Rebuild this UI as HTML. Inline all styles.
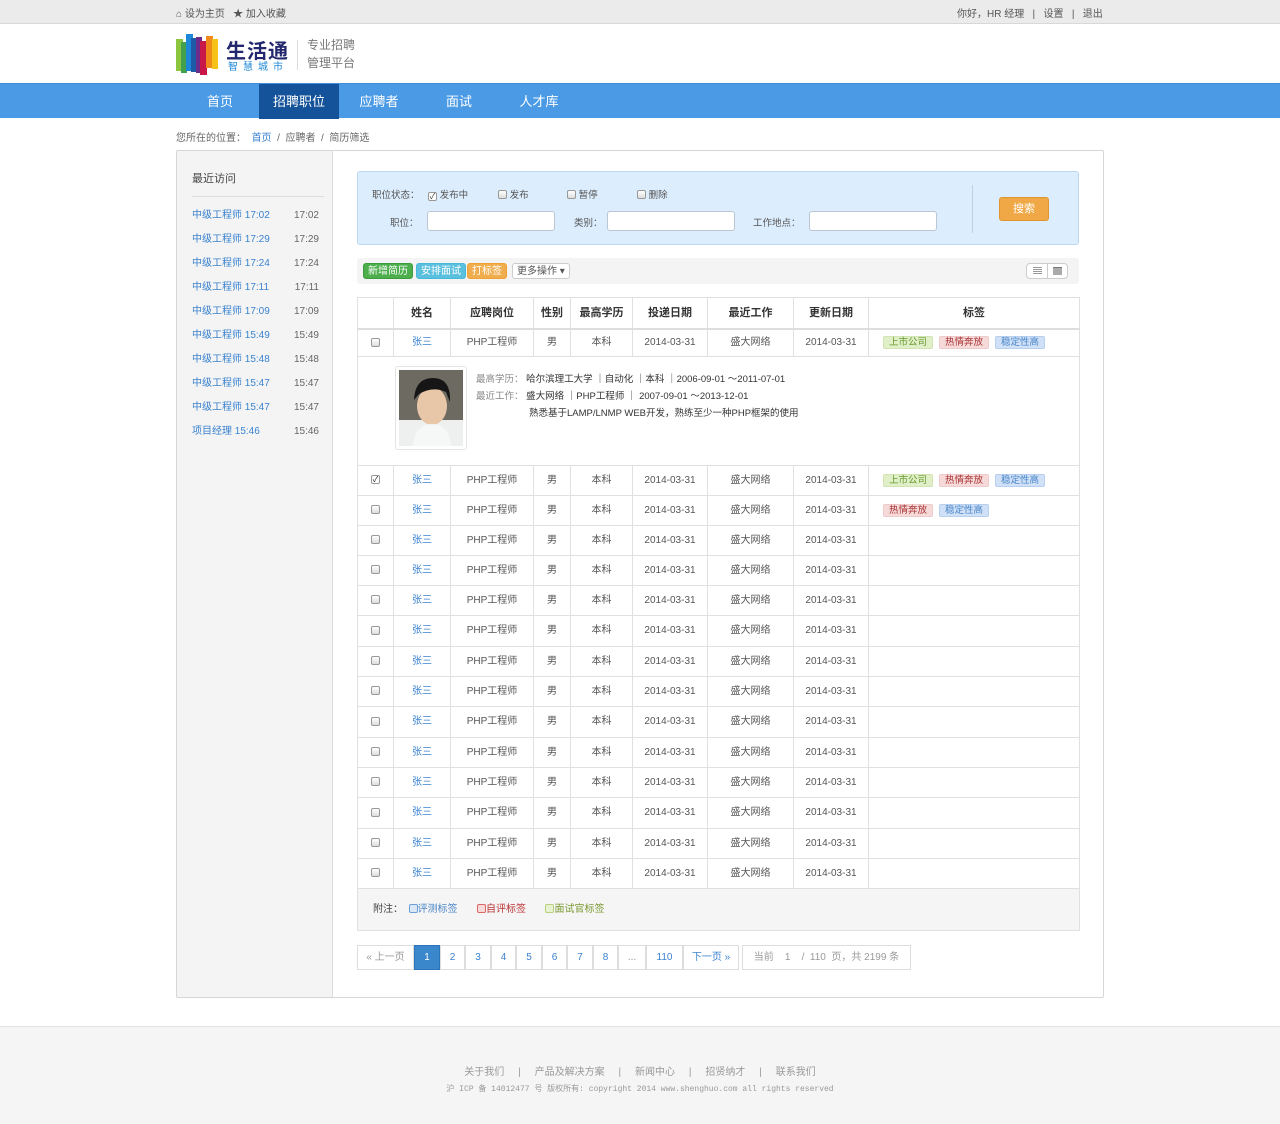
<!DOCTYPE html>
<html><head><meta charset="utf-8">
<style>
*{margin:0;padding:0;box-sizing:border-box}
body{width:1280px;height:1124px;position:relative;background:#fff;font-family:"Liberation Sans","Noto Sans CJK SC",sans-serif;font-size:10px;color:#555;overflow:hidden}
.a{position:absolute}
a{color:#3a82d0;text-decoration:none}
.topbar{left:0;top:0;width:1280px;height:24px;background:#ebebeb;border-bottom:1px solid #d8d8d8}
.nav{left:0;top:83px;width:1280px;height:35px;background:#4a9ae6;border-top:1px solid #3f8cd8}
.nav span{position:absolute;top:0;height:35px;line-height:35px;color:#fff;font-size:13px;text-align:center}
.box{left:176px;top:150px;width:928px;height:848px;border:1px solid #d6d6d6;border-radius:2px}
.side{left:177px;top:151px;width:156px;height:846px;background:#f4f4f4;border-right:1px solid #dcdcdc}
.sitem{position:absolute;left:15px;width:127px;font-size:10px;height:14px;line-height:14px}
.sitem b{font-weight:normal;position:absolute;right:0;top:0;color:#666}
.search{left:357px;top:171px;width:722px;height:74px;background:#dcedfd;border:1px solid #b9d9f4;border-radius:3px}
.cb{display:inline-block;width:9px;height:9px;border:1px solid #999;border-radius:2px;background:linear-gradient(#fff,#ddd);vertical-align:-1px}
.inp{position:absolute;height:20px;background:#fff;border:1px solid #bcc6d0;border-radius:3px;top:39px}
.tool{left:357px;top:258px;width:722px;height:26px;background:#f4f4f4;border-radius:3px}
.btn{position:absolute;top:5px;height:16px;line-height:15px;color:#fff;font-size:10px;padding:0 4px;border-radius:3px}
table{border-collapse:collapse;position:absolute;left:357px;table-layout:fixed;width:722px}
td,th{border:1px solid #e0e0e0;text-align:center;font-size:10px;color:#555;font-weight:normal;padding:0;vertical-align:middle;line-height:14px}
td .cb{vertical-align:middle}
th{font-weight:bold;color:#333;font-size:11px;height:31px;border-bottom:2px solid #ddd}
td.tg{text-align:left;padding-left:14px}
.tag{display:inline-block;height:13px;line-height:12px;padding:0 5px;border-radius:2px;font-size:9.5px;margin-right:6px}
.g{background:#e0efc8;color:#6a9a30;border:1px solid #d2e4b2}
.r{background:#f6d9d9;color:#a33;border:1px solid #ecc}
.bl{background:#cfe0f7;color:#4a86c8;border:1px solid #b8d0ef}
.pg{position:absolute;top:945px;height:25px;border:1px solid #ddd;line-height:23px;text-align:center;color:#3a82d0;font-size:10px;background:#fff}
.foot{left:0;top:1026px;width:1280px;height:98px;background:#f5f5f5;border-top:1px solid #e2e2e2}
</style></head><body>
<div class="a topbar"></div>
<div class="a" style="left:176px;top:5px;font-size:10px;color:#555">&#8962; 设为主页 &nbsp;&nbsp;★ 加入收藏</div>
<div class="a" style="left:957px;top:5px;font-size:10px;color:#555">你好，HR 经理 &nbsp;&nbsp;|&nbsp;&nbsp; 设置 &nbsp;&nbsp;|&nbsp;&nbsp; 退出</div>

<svg class="a" style="left:176px;top:33px" width="46" height="42">
<rect x="0" y="6" width="7" height="32" fill="#8cc63f"/>
<rect x="5" y="9" width="6" height="31" fill="#44a04a"/>
<rect x="10" y="1" width="7" height="37" fill="#1e88d8"/>
<rect x="15" y="5" width="6" height="34" fill="#1d5aa8"/>
<rect x="20" y="4" width="6" height="36" fill="#6b2c8c"/>
<rect x="24" y="8" width="7" height="34" fill="#c8184a"/>
<rect x="30" y="3" width="7" height="32" fill="#f08a1a"/>
<rect x="36" y="6" width="6" height="30" fill="#f6c21a"/>
</svg>
<div class="a" style="left:226px;top:35px;font-size:20px;font-weight:bold;color:#23286e;letter-spacing:1px">生活通</div>
<div class="a" style="left:228px;top:58px;font-size:10px;color:#1e88d8;letter-spacing:5px">智慧城市</div>
<div class="a" style="left:297px;top:40px;width:1px;height:30px;background:#ddd"></div>
<div class="a" style="left:307px;top:36px;font-size:12px;color:#777;line-height:18px">专业招聘<br>管理平台</div>

<div class="a nav">
<span style="left:190px;width:60px">首页</span>
<span style="left:259px;width:80px;background:#14539a">招聘职位</span>
<span style="left:349px;width:60px">应聘者</span>
<span style="left:429px;width:60px">面试</span>
<span style="left:509px;width:60px">人才库</span>
</div>
<div class="a" style="left:176px;top:129px;font-size:10px;color:#666">您所在的位置： &nbsp;<a>首页</a> &nbsp;/ &nbsp;应聘者 &nbsp;/ &nbsp;简历筛选</div>

<div class="a box"></div>
<div class="a side">
<div class="a" style="left:15px;top:19px;font-size:11px;color:#444">最近访问</div>
<div class="a" style="left:15px;top:45px;width:132px;height:1px;background:#ddd"></div>
<div class="sitem" style="top:58px"><a>中级工程师 17:02</a><b>17:02</b></div>
<div class="sitem" style="top:82px"><a>中级工程师 17:29</a><b>17:29</b></div>
<div class="sitem" style="top:106px"><a>中级工程师 17:24</a><b>17:24</b></div>
<div class="sitem" style="top:130px"><a>中级工程师 17:11</a><b>17:11</b></div>
<div class="sitem" style="top:154px"><a>中级工程师 17:09</a><b>17:09</b></div>
<div class="sitem" style="top:178px"><a>中级工程师 15:49</a><b>15:49</b></div>
<div class="sitem" style="top:202px"><a>中级工程师 15:48</a><b>15:48</b></div>
<div class="sitem" style="top:226px"><a>中级工程师 15:47</a><b>15:47</b></div>
<div class="sitem" style="top:250px"><a>中级工程师 15:47</a><b>15:47</b></div>
<div class="sitem" style="top:274px"><a>项目经理 15:46</a><b>15:46</b></div>
</div>

<div class="a search">
<div class="a" style="left:14px;top:15px;font-size:9.5px;color:#555">职位状态：</div>
<div class="a" style="left:70px;top:15px;font-size:9.5px"><span class="cb" style="background:#fff;line-height:7px;font-size:8px;text-align:center;color:#333">✓</span> 发布中</div>
<div class="a" style="left:140px;top:15px;font-size:9.5px"><span class="cb"></span> 发布</div>
<div class="a" style="left:209px;top:15px;font-size:9.5px"><span class="cb"></span> 暂停</div>
<div class="a" style="left:279px;top:15px;font-size:9.5px"><span class="cb"></span> 删除</div>
<div class="a" style="left:32px;top:43px;font-size:9.5px">职位：</div>
<div class="inp" style="left:69px;width:128px"></div>
<div class="a" style="left:216px;top:43px;font-size:9.5px">类别：</div>
<div class="inp" style="left:249px;width:128px"></div>
<div class="a" style="left:395px;top:43px;font-size:9.5px">工作地点：</div>
<div class="inp" style="left:451px;width:128px"></div>
<div class="a" style="left:614px;top:13px;width:1px;height:48px;background:#c4cfda"></div>
<div class="a" style="left:641px;top:25px;width:50px;height:24px;background:#f0a846;border:1px solid #e09530;border-radius:3px;color:#fff;font-size:11px;text-align:center;line-height:22px">搜索</div>
</div>

<div class="a tool">
<div class="btn" style="left:6px;background:#4cae4c;border:1px solid #3d9a3d">新增简历</div>
<div class="btn" style="left:59px;background:#5bc0de;border:1px solid #46b8da">安排面试</div>
<div class="btn" style="left:110px;background:#f0ad4e;border:1px solid #eea236">打标签</div>
<div class="btn" style="left:155px;background:#fff;border:1px solid #ccc;color:#555">更多操作 ▾</div>
<div class="a" style="left:669px;top:5px;width:42px;height:16px;border:1px solid #ccc;border-radius:4px;background:#fff"><div class="a" style="left:20px;top:0;width:1px;height:14px;background:#ccc"></div><div class="a" style="left:6px;top:3px;width:9px;height:8px;background:repeating-linear-gradient(#999 0 1px,#fff 1px 2px)"></div><div class="a" style="left:26px;top:3px;width:9px;height:8px;background:#aaa;border-top:1px solid #777"></div></div>
</div>

<table style="top:297px">
<colgroup><col style="width:36px"><col style="width:57px"><col style="width:83px"><col style="width:37px"><col style="width:62px"><col style="width:75px"><col style="width:86px"><col style="width:75px"><col style="width:211px"></colgroup>
<tr><th></th><th>姓名</th><th>应聘岗位</th><th>性别</th><th>最高学历</th><th>投递日期</th><th>最近工作</th><th>更新日期</th><th>标签</th></tr>
<tr style="height:28px"><td><span class="cb"></span></td><td><a>张三</a></td><td>PHP工程师</td><td>男</td><td>本科</td><td>2014-03-31</td><td>盛大网络</td><td>2014-03-31</td><td class="tg"><span class="tag g">上市公司</span><span class="tag r">热情奔放</span><span class="tag bl">稳定性高</span></td></tr>
<tr style="height:109px"><td colspan="9" style="text-align:left;position:relative">
<div class="a" style="left:37px;top:9px;width:72px;height:84px;border:1px solid #e4e4e4;border-radius:3px;background:#fff;padding:3px">
<svg width="64" height="76"><rect width="64" height="76" fill="#6d6a62"/><rect y="50" width="64" height="26" fill="#eef0f0"/><ellipse cx="33" cy="36" rx="15" ry="19" fill="#e8c6a8"/><path d="M15 30 Q16 8 34 8 Q52 8 51 32 L47 22 Q34 16 20 24 Z" fill="#161616"/><path d="M14 76 Q16 54 33 54 Q50 54 52 76Z" fill="#f6f8f8"/></svg></div>
<div class="a" style="left:118px;top:14px;line-height:17px;font-size:9.5px;color:#333"><span style="color:#888">最高学历：</span> 哈尔滨理工大学 ｜自动化 ｜本科 ｜2006-09-01 ～2011-07-01<br><span style="color:#888">最近工作：</span> 盛大网络 ｜PHP工程师 ｜ 2007-09-01 ～2013-12-01<br><span style="padding-left:53px">熟悉基于LAMP/LNMP WEB开发，熟练至少一种PHP框架的使用</span></div>
</td></tr>
<tr style="height:30px"><td><span class="cb" style="background:#fff;font-size:8px;line-height:7px;color:#222">✓</span></td><td><a>张三</a></td><td>PHP工程师</td><td>男</td><td>本科</td><td>2014-03-31</td><td>盛大网络</td><td>2014-03-31</td><td class="tg"><span class="tag g">上市公司</span><span class="tag r">热情奔放</span><span class="tag bl">稳定性高</span></td></tr>
<tr style="height:30px"><td><span class="cb"></span></td><td><a>张三</a></td><td>PHP工程师</td><td>男</td><td>本科</td><td>2014-03-31</td><td>盛大网络</td><td>2014-03-31</td><td class="tg"><span class="tag r">热情奔放</span><span class="tag bl">稳定性高</span></td></tr>
<tr style="height:30px"><td><span class="cb"></span></td><td><a>张三</a></td><td>PHP工程师</td><td>男</td><td>本科</td><td>2014-03-31</td><td>盛大网络</td><td>2014-03-31</td><td></td></tr>
<tr style="height:30px"><td><span class="cb"></span></td><td><a>张三</a></td><td>PHP工程师</td><td>男</td><td>本科</td><td>2014-03-31</td><td>盛大网络</td><td>2014-03-31</td><td></td></tr>
<tr style="height:30px"><td><span class="cb"></span></td><td><a>张三</a></td><td>PHP工程师</td><td>男</td><td>本科</td><td>2014-03-31</td><td>盛大网络</td><td>2014-03-31</td><td></td></tr>
<tr style="height:31px"><td><span class="cb"></span></td><td><a>张三</a></td><td>PHP工程师</td><td>男</td><td>本科</td><td>2014-03-31</td><td>盛大网络</td><td>2014-03-31</td><td></td></tr>
<tr style="height:30px"><td><span class="cb"></span></td><td><a>张三</a></td><td>PHP工程师</td><td>男</td><td>本科</td><td>2014-03-31</td><td>盛大网络</td><td>2014-03-31</td><td></td></tr>
<tr style="height:30px"><td><span class="cb"></span></td><td><a>张三</a></td><td>PHP工程师</td><td>男</td><td>本科</td><td>2014-03-31</td><td>盛大网络</td><td>2014-03-31</td><td></td></tr>
<tr style="height:31px"><td><span class="cb"></span></td><td><a>张三</a></td><td>PHP工程师</td><td>男</td><td>本科</td><td>2014-03-31</td><td>盛大网络</td><td>2014-03-31</td><td></td></tr>
<tr style="height:30px"><td><span class="cb"></span></td><td><a>张三</a></td><td>PHP工程师</td><td>男</td><td>本科</td><td>2014-03-31</td><td>盛大网络</td><td>2014-03-31</td><td></td></tr>
<tr style="height:30px"><td><span class="cb"></span></td><td><a>张三</a></td><td>PHP工程师</td><td>男</td><td>本科</td><td>2014-03-31</td><td>盛大网络</td><td>2014-03-31</td><td></td></tr>
<tr style="height:31px"><td><span class="cb"></span></td><td><a>张三</a></td><td>PHP工程师</td><td>男</td><td>本科</td><td>2014-03-31</td><td>盛大网络</td><td>2014-03-31</td><td></td></tr>
<tr style="height:30px"><td><span class="cb"></span></td><td><a>张三</a></td><td>PHP工程师</td><td>男</td><td>本科</td><td>2014-03-31</td><td>盛大网络</td><td>2014-03-31</td><td></td></tr>
<tr style="height:30px"><td><span class="cb"></span></td><td><a>张三</a></td><td>PHP工程师</td><td>男</td><td>本科</td><td>2014-03-31</td><td>盛大网络</td><td>2014-03-31</td><td></td></tr>
<tr style="height:42px;background:#f5f5f5"><td colspan="9" style="text-align:left;padding-left:15px;font-size:10px;color:#444">附注： &nbsp;<span style="color:#4a86c8"><span class="cb" style="border-color:#6c9fd8;background:#dbe8f8"></span>评测标签</span> &nbsp;&nbsp;&nbsp;&nbsp;&nbsp; <span style="color:#b33"><span class="cb" style="border-color:#d66;background:#f6d9d9"></span>自评标签</span> &nbsp;&nbsp;&nbsp;&nbsp;&nbsp; <span style="color:#7a9a30"><span class="cb" style="border-color:#b8d07a;background:#e8f2d2"></span>面试官标签</span></td></tr>
</table>

<div class="pg" style="left:357px;width:57px;color:#999">« 上一页</div>
<div class="pg" style="left:414px;width:26px;background:#3a87cc;color:#fff;border-color:#2c75b8">1</div>
<div class="pg" style="left:440px;width:25px">2</div>
<div class="pg" style="left:465px;width:26px">3</div>
<div class="pg" style="left:491px;width:25px">4</div>
<div class="pg" style="left:516px;width:26px">5</div>
<div class="pg" style="left:542px;width:25px">6</div>
<div class="pg" style="left:567px;width:26px">7</div>
<div class="pg" style="left:593px;width:25px">8</div>
<div class="pg" style="left:618px;width:28px;color:#999">...</div>
<div class="pg" style="left:646px;width:37px">110</div>
<div class="pg" style="left:683px;width:56px">下一页 »</div>
<div class="pg" style="left:742px;width:169px;color:#999">当前 &nbsp;&nbsp; 1 &nbsp;&nbsp; / &nbsp;110 &nbsp;页，共 2199 条</div>

<div class="a foot">
<div class="a" style="left:0;width:1280px;top:36px;text-align:center;font-size:10px;color:#999">关于我们 &nbsp;&nbsp;&nbsp;&nbsp;|&nbsp;&nbsp;&nbsp;&nbsp; 产品及解决方案 &nbsp;&nbsp;&nbsp;&nbsp;|&nbsp;&nbsp;&nbsp;&nbsp; 新闻中心 &nbsp;&nbsp;&nbsp;&nbsp;|&nbsp;&nbsp;&nbsp;&nbsp; 招贤纳才 &nbsp;&nbsp;&nbsp;&nbsp;|&nbsp;&nbsp;&nbsp;&nbsp; 联系我们</div>
<div class="a" style="left:0;width:1280px;top:56px;text-align:center;font-size:8px;color:#999;font-family:'Liberation Mono','Noto Sans CJK SC',monospace">沪 ICP 备 14012477 号 版权所有: copyright 2014 www.shenghuo.com all rights reserved</div>
</div>
</body></html>
